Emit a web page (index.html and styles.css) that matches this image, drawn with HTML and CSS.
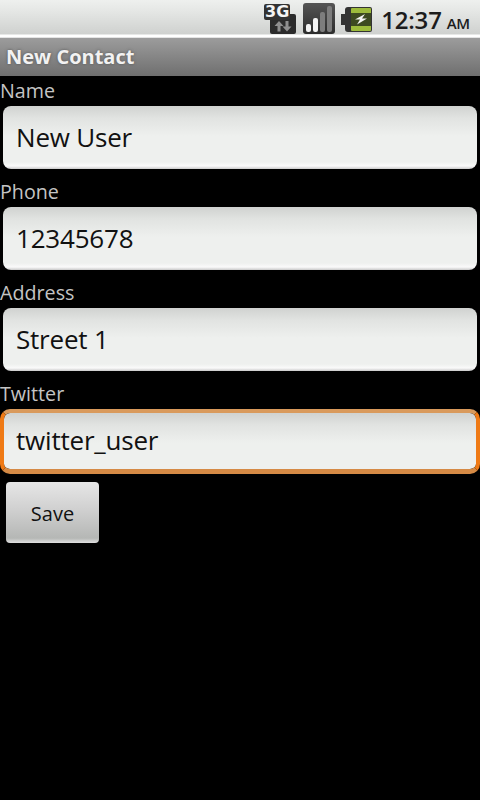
FILE: index.html
```html
<!DOCTYPE html>
<html lang="en">
<head>
    <meta charset="UTF-8">
    <meta name="viewport" content="width=device-width, initial-scale=1.0">
    <title>New Contact</title>
    <link rel="stylesheet" href="styles.css">
</head>
<body>
    <div class="status-bar">
        <div class="net-icon">
            <svg class="net-arrows" width="26" height="20" viewBox="0 0 26 20">
                <rect width="26" height="20" rx="2" fill="#2b2b2b"/>
                <path d="M9 7l4.500 5h-3v5.500h-3v-5.500h-3z" fill="#8f8f8f"/>
                <path d="M15.500 7h3v5.500h3l-4.500 5-4.500-5h3z" fill="#8f8f8f"/>
            </svg>
            <span class="net-label">3G</span>
        </div>
        <svg class="signal" width="32" height="31" viewBox="0 0 32 31">
            <defs>
                <linearGradient id="signalBg" x1="0" y1="0" x2="0" y2="1">
                    <stop offset="0" stop-color="#555"/>
                    <stop offset="1" stop-color="#2c2c2c"/>
                </linearGradient>
            </defs>
            <rect width="32" height="31" rx="3" fill="url(#signalBg)"/>
            <rect x="3" y="21" width="5" height="8" rx="2" fill="#f4f4f4"/>
            <rect x="10" y="15" width="5" height="14" rx="2" fill="#f4f4f4"/>
            <rect x="17" y="9" width="5" height="20" rx="2" fill="#7d7d7d"/>
            <rect x="24" y="3" width="5" height="26" rx="2" fill="#7d7d7d"/>
        </svg>
        <svg class="battery" width="32" height="25" viewBox="0 0 32 25">
            <path d="M8 0h22a2 2 0 0 1 2 2v21a2 2 0 0 1-2 2h-22a3 3 0 0 1-3-3v-4h-4v-11h4v-4a3 3 0 0 1 3-3z" fill="#333"/>
            <rect x="11" y="1" width="20" height="23" rx="1" fill="#9dbb3c"/>
            <rect x="11" y="6" width="20" height="13" fill="#3d4a20"/>
            <path d="M25 7l-10 5.500h5l-3 5 10-6h-5l3-4.500z" fill="#f4f4f4"/>
        </svg>
        <div class="clock">12:37<span class="ampm">AM</span></div>
    </div>

    <div class="title-bar">New Contact</div>

    <form class="contact-form">
        <label class="field-label" for="name">Name</label>
        <input class="field" id="name" type="text" value="New User">

        <label class="field-label" for="phone">Phone</label>
        <input class="field" id="phone" type="text" value="12345678">

        <label class="field-label" for="address">Address</label>
        <input class="field" id="address" type="text" value="Street 1">

        <label class="field-label" for="twitter">Twitter</label>
        <input class="field field-focused" id="twitter" type="text" value="twitter_user">

        <button class="save-btn" type="button">Save</button>
    </form>
</body>
</html>
```

FILE: styles.css
```css
* {
    margin: 0;
    padding: 0;
    box-sizing: border-box;
}

body {
    width: 480px;
    height: 800px;
    overflow: hidden;
    background-color: #000;
    font-family: "Open Sans", "Noto Sans", sans-serif;
}

.status-bar {
    height: 38px;
    display: flex;
    align-items: flex-start;
    justify-content: flex-end;
    padding: 3px 10px 0 0;
    background: linear-gradient(to bottom, #eef0ee 0, #e4e6e4 12px, #cfd1cf 34px, #fff 35px, #fff 37px, #c8c8c8 38px);
}

.net-icon {
    position: relative;
    width: 32px;
    height: 31px;
    margin-right: 7px;
}

.net-label {
    position: absolute;
    top: 1px;
    left: 0;
    width: 26px;
    height: 16px;
    background-color: #333;
    border-radius: 2px;
    color: #f4f4f4;
    font-family: "DejaVu Sans", sans-serif;
    font-size: 16px;
    font-weight: 700;
    line-height: 16px;
    text-align: center;
}

.net-arrows {
    position: absolute;
    top: 11px;
    left: 6px;
}

.signal {
    margin-right: 5px;
}

.battery {
    margin: 4px 9px 0 0;
}

.clock {
    font-size: 24px;
    font-weight: 600;
    letter-spacing: -0.2px;
    line-height: 34px;
    color: #1c1c1c;
    white-space: nowrap;
}

.ampm {
    margin-left: 5px;
    font-size: 15px;
}

.title-bar {
    height: 38px;
    padding-left: 6px;
    background: linear-gradient(to bottom, #9c9c9c, #6f6f6f);
    color: #f2f2f2;
    font-size: 20px;
    font-weight: 700;
    line-height: 37px;
    text-shadow: 0 0 3px #555;
}

.contact-form {
    display: flex;
    flex-direction: column;
    align-items: flex-start;
}

.field-label {
    height: 30px;
    color: #c4c4c4;
    font-size: 19.7px;
    line-height: 30px;
}

.field {
    display: block;
    width: 474px;
    height: 63px;
    margin: 0 3px 8px;
    padding: 0 13px 2px;
    border: 0;
    border-radius: 8px;
    outline: 0;
    background: linear-gradient(to bottom, #d0d2d0 0, #e1e3e1 12px, #eef0ee 30px, #eef0ee 56px, #fafafa 60px, #c9c9c9 63px);
    color: #111;
    font-family: inherit;
    font-size: 26px;
    letter-spacing: -0.2px;
}

.field-focused {
    width: 480px;
    height: 65px;
    margin: 0 0 8px;
    padding: 0 12px 3px;
    border-top: 4px solid #d99a5c;
    border-bottom: 5px solid #d58a45;
    border-left: 4px solid #ef7a15;
    border-right: 4px solid #ef7a15;
    border-radius: 10px;
    background-clip: padding-box;
}

.save-btn {
    width: 93px;
    height: 61px;
    margin-left: 6px;
    padding-top: 1px;
    border: 0;
    border-radius: 4px;
    background: linear-gradient(to bottom, #e6e6e6 0, #d0d0d0 45%, #b5b7b5 92%, #e0e0e0 100%);
    color: #111;
    font-family: inherit;
    font-size: 20px;
}
```
